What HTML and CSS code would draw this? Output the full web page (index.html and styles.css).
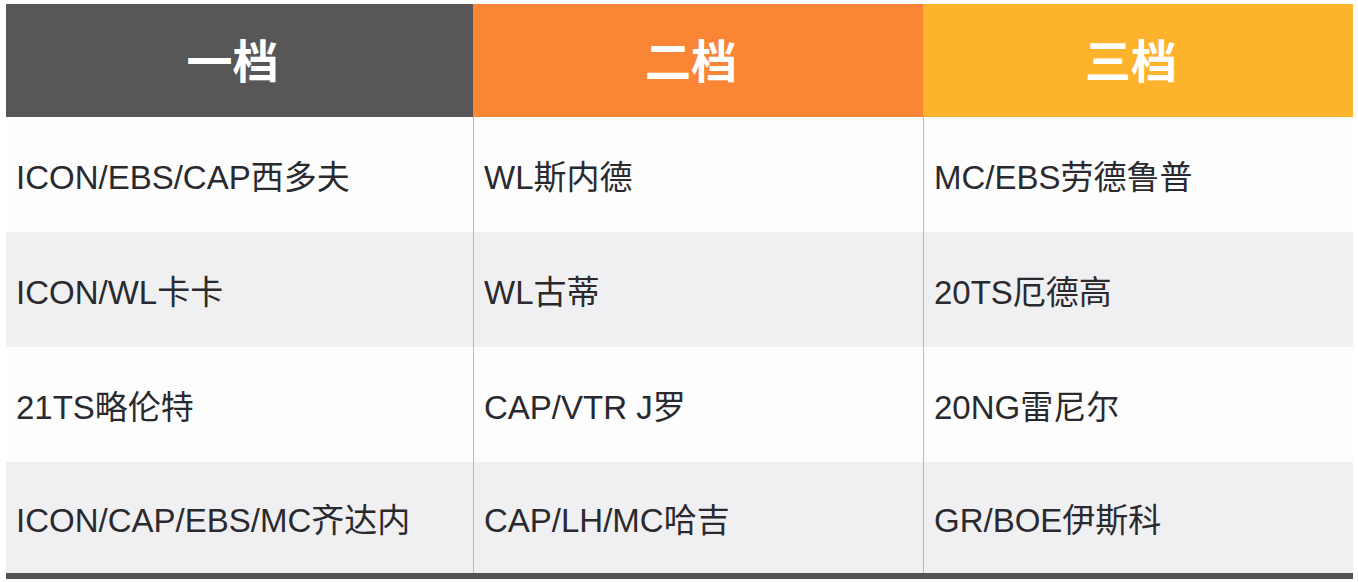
FILE: index.html
```html
<!DOCTYPE html>
<html lang="zh">
<head>
<meta charset="utf-8">
<link rel="stylesheet" href="styles.css">
</head>
<body>
<div class="table">
  <div class="head h1">一档</div>
  <div class="head h2">二档</div>
  <div class="head h3">三档</div>

  <div class="cell">ICON/EBS/CAP西多夫</div>
  <div class="cell">WL斯内德</div>
  <div class="cell">MC/EBS劳德鲁普</div>

  <div class="cell alt">ICON/WL卡卡</div>
  <div class="cell alt">WL古蒂</div>
  <div class="cell alt">20TS厄德高</div>

  <div class="cell">21TS略伦特</div>
  <div class="cell">CAP/VTR J罗</div>
  <div class="cell">20NG雷尼尔</div>

  <div class="cell alt">ICON/CAP/EBS/MC齐达内</div>
  <div class="cell alt">CAP/LH/MC哈吉</div>
  <div class="cell alt">GR/BOE伊斯科</div>
</div>
</body>
</html>
```

FILE: styles.css
```css
html, body {
  margin: 0;
  padding: 0;
  background: #ffffff;
}
body {
  padding: 4px 5px 0 6px;
  font-family: "Liberation Sans", Arial, "Noto Sans CJK SC", sans-serif;
}
.table {
  display: grid;
  grid-template-columns: 467px 450px 430px;
  grid-template-rows: 113px 115px 115px 115px 111px;
  border-bottom: 6px solid #535355;
}
.head {
  display: flex;
  align-items: center;
  justify-content: center;
  color: #ffffff;
  font-family: "Noto Sans CJK SC", sans-serif;
  font-weight: 700;
  font-size: 46px;
  padding: 0 14px 6px 0;
}
.h1 { background: #585656; }
.h2 { background: #f98535; }
.h3 { background: #fdb32b; }
.cell {
  display: flex;
  align-items: center;
  padding-left: 10px;
  background: #fdfdfe;
  color: #2a2a2e;
  font-size: 33px;
  border-left: 1px solid #b8b8be;
}
.cell:nth-child(3n+1) {
  border-left: none;
}
.alt {
  background: #f0f0f2;
}
```
